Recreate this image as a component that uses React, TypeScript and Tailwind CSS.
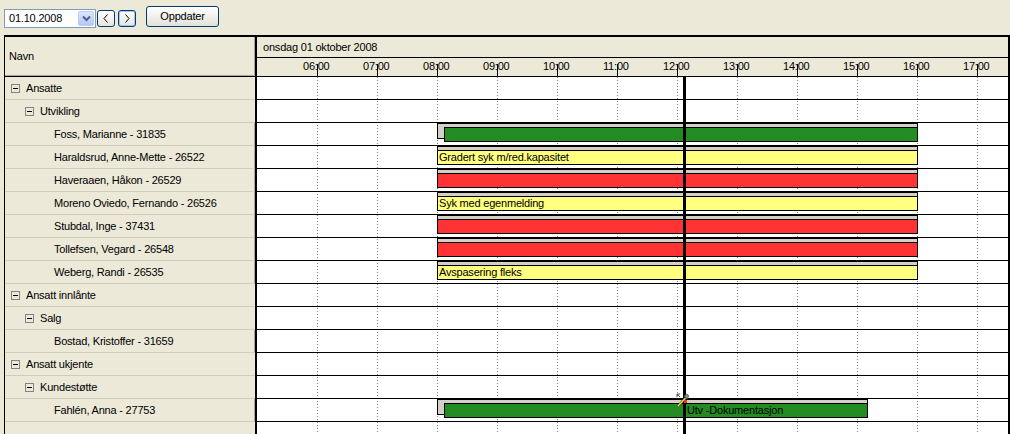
import React from "react";

type Bar = {
  color: string;
  start: number;
  end: number;
  inset?: boolean;
  text?: string;
  textAt?: number;
};

type Row = { label: string; level: number; bar?: Bar };

const HOUR = 60;
const xOf = (h: number) => Math.round((h - 5) * HOUR);

const rows: Row[] = [
  { label: "Ansatte", level: 0 },
  { label: "Utvikling", level: 1 },
  { label: "Foss, Marianne - 31835", level: 2, bar: { color: "#228b22", start: 8, end: 16, inset: true } },
  { label: "Haraldsrud, Anne-Mette - 26522", level: 2, bar: { color: "#ffff80", start: 8, end: 16, text: "Gradert syk m/red.kapasitet" } },
  { label: "Haveraaen, Håkon - 26529", level: 2, bar: { color: "#ff3333", start: 8, end: 16 } },
  { label: "Moreno Oviedo, Fernando - 26526", level: 2, bar: { color: "#ffff80", start: 8, end: 16, text: "Syk med egenmelding" } },
  { label: "Stubdal, Inge - 37431", level: 2, bar: { color: "#ff3333", start: 8, end: 16 } },
  { label: "Tollefsen, Vegard - 26548", level: 2, bar: { color: "#ff3333", start: 8, end: 16 } },
  { label: "Weberg, Randi - 26535", level: 2, bar: { color: "#ffff80", start: 8, end: 16, text: "Avspasering fleks" } },
  { label: "Ansatt innlånte", level: 0 },
  { label: "Salg", level: 1 },
  { label: "Bostad, Kristoffer - 31659", level: 2 },
  { label: "Ansatt ukjente", level: 0 },
  { label: "Kundestøtte", level: 1 },
  {
    label: "Fahlén, Anna - 27753",
    level: 2,
    bar: { color: "#228b22", start: 8, end: 15 + 10 / 60, inset: true, text: "Utv -Dokumentasjon", textAt: 430 },
  },
];

const hours = [6, 7, 8, 9, 10, 11, 12, 13, 14, 15, 16, 17];

const MinusBox = () => (
  <span className="w-[9px] h-[9px] border border-[#848284] flex items-center justify-center shrink-0">
    <span className="w-[5px] h-px bg-black" />
  </span>
);

const TreeRow = ({ row }: { row: Row }) => {
  if (row.level === 2) {
    return (
      <div className="h-[23px] border-b border-[#cfccbe] border-r border-r-[#aca899] flex items-center pl-[49px]">
        {row.label}
      </div>
    );
  }
  return (
    <div
      className={
        "h-[23px] border-b border-[#cfccbe] flex items-center gap-[6px] " +
        (row.level === 0 ? "pl-[6px]" : "pl-[20px]")
      }
    >
      <MinusBox />
      <span>{row.label}</span>
    </div>
  );
};

const GanttBar = ({ bar }: { bar: Bar }) => {
  const left = xOf(bar.start);
  const width = xOf(bar.end) - left + 1;
  const inner = bar.inset ? 7 : 0;
  return (
    <>
      <div
        className="absolute top-0 h-[16px] border border-black bg-[#d4d0c8]"
        style={{ left, width }}
      />
      <div
        className="absolute top-[4px] h-[15px] border border-black flex items-center overflow-hidden whitespace-nowrap leading-[13px] pl-px"
        style={{ left: left + inner, width: width - inner, background: bar.color }}
      >
        {bar.text && !bar.textAt ? bar.text : null}
      </div>
      {bar.text && bar.textAt ? (
        <div
          className="absolute top-[5px] h-[13px] leading-[13px] whitespace-nowrap"
          style={{ left: bar.textAt }}
        >
          {bar.text}
        </div>
      ) : null}
    </>
  );
};

const XpButton = ({ children, hot }: { children: React.ReactNode; hot?: boolean }) => (
  <div
    className={
      "h-[17px] w-[18px] rounded-[3px] border border-[#003c74] bg-linear-to-b from-[#ffffff] to-[#e6e4dc] flex items-center justify-center " +
      (hot ? "shadow-[inset_0_0_0_1px_#a9c4ef]" : "")
    }
  >
    {children}
  </div>
);

export default function App() {
  return (
    <div className="w-[1010px] h-[434px] overflow-hidden bg-[#ece9d8] text-[11px] tracking-[-0.2px] text-black font-['Liberation_Sans',Arial,sans-serif]">
      {/* toolbar */}
      <div className="h-[35px] flex items-start">
        <div className="ml-[4px] mt-[9px] w-[92px] h-[19px] border border-[#7f9db9] bg-white flex items-center justify-between">
          <span className="pl-[4px]">01.10.2008</span>
          <span className="mr-px h-[15px] w-[16px] rounded-[2px] border border-[#b9cdf7] bg-linear-to-b from-[#dce7fe] to-[#b3c7f5] flex items-center justify-center">
            <svg width="9" height="7" viewBox="0 0 9 7">
              <path d="M1 1.5 L4.5 5 L8 1.5" stroke="#4d6185" strokeWidth="2" fill="none" />
            </svg>
          </span>
        </div>
        <div className="ml-px mt-[10px] flex gap-[3px]">
          <XpButton>
            <svg width="6" height="9" viewBox="0 0 6 9">
              <path d="M4.5 0.5 L1 4.5 L4.5 8.5" stroke="#000" strokeWidth="1" fill="none" />
            </svg>
          </XpButton>
          <XpButton hot>
            <svg width="6" height="9" viewBox="0 0 6 9">
              <path d="M1.5 0.5 L5 4.5 L1.5 8.5" stroke="#000" strokeWidth="1" fill="none" />
            </svg>
          </XpButton>
        </div>
        <div className="ml-[10px] mt-[6px] h-[21px] w-[73px] rounded-[3px] border border-[#003c74] bg-linear-to-b from-[#ffffff] to-[#e3e1d8] flex items-center justify-center">
          Oppdater
        </div>
      </div>

      {/* grid */}
      <div className="ml-[4px] w-[1006px] border-l border-t-2 border-r-2 border-black flex">
        {/* tree */}
        <div className="w-[250px] shrink-0">
          <div className="h-[40px] border-b border-black">
            <div className="h-[39px] border-r border-b border-[#aca899] flex items-center pl-[4px]">Navn</div>
          </div>
          {rows.map((r, i) => (
            <TreeRow key={i} row={r} />
          ))}
          <div className="h-[23px] border-b border-[#cfccbe]" />
        </div>

        <div className="w-[2px] bg-black shrink-0" />

        {/* chart */}
        <div className="w-[751px] shrink-0">
          <div className="h-[40px] border-b border-black">
            <div className="h-[21px] border-b border-black pl-[6px] flex items-center">onsdag 01 oktober 2008</div>
            <div className="relative h-[18px]">
              {hours.map((h) => (
                <React.Fragment key={h}>
                  <span className="absolute top-[2px] leading-[13px]" style={{ left: xOf(h) - 14 }}>
                    {String(h).padStart(2, "0")}:00
                  </span>
                  <span className="absolute top-[6px] bottom-0 w-px bg-black" style={{ left: xOf(h) }} />
                </React.Fragment>
              ))}
            </div>
          </div>

          <div className="relative bg-white">
            {hours.map((h) => (
              <span
                key={h}
                className="absolute top-0 bottom-0 w-px bg-[repeating-linear-gradient(to_bottom,#808080_0_1px,transparent_1px_3px)]"
                style={{ left: xOf(h) }}
              />
            ))}
            {rows.map((r, i) => (
              <div key={i} className="relative h-[23px] border-b border-black">
                {r.bar ? <GanttBar bar={r.bar} /> : null}
              </div>
            ))}
            <div className="relative h-[23px] border-b border-black" />
            {/* now line */}
            <div className="absolute top-0 bottom-0 left-[426px] w-[3px] bg-black" />
            {/* drag cursor */}
            <svg className="absolute left-[419px] top-[316px]" width="14" height="15" viewBox="0 0 14 15">
              <path d="M1 1 L4 1 M1 1 L1 4 M1 1 L4 4" stroke="#555" strokeWidth="1" fill="none" />
              <path d="M8 3 L11 1 L13 3 L11 6 Z" fill="#8a8a8a" stroke="#444" strokeWidth="0.6" />
              <path d="M9.5 5 L2 13" stroke="#333" strokeWidth="2.4" />
              <path d="M9.5 5 L2 13" stroke="#f5e13a" strokeWidth="1.2" />
              <rect x="8" y="7" width="3" height="3" fill="#e8321e" />
            </svg>
          </div>
        </div>
      </div>
    </div>
  );
}
